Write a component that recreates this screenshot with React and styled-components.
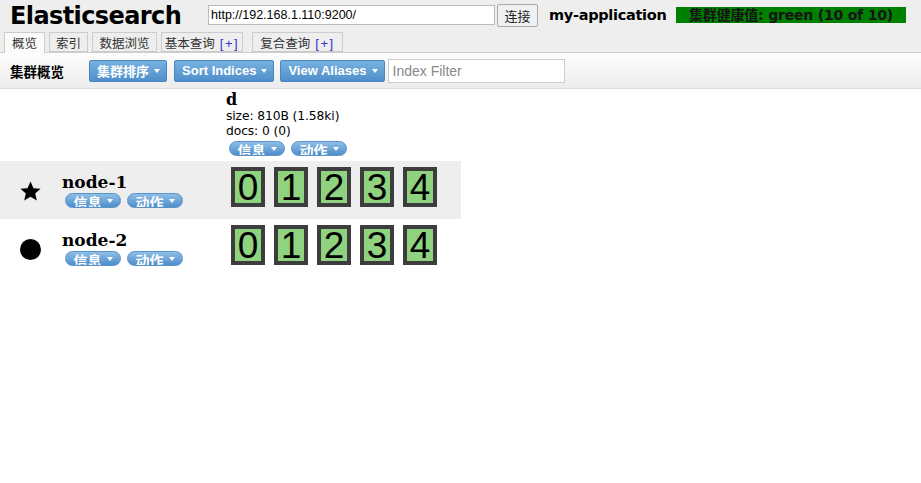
import React from 'react'
import styled, { createGlobalStyle } from 'styled-components'

const Global = createGlobalStyle`
  html, body { margin: 0; padding: 0; background: #fff; }
  body { font-family: "Liberation Sans", Arial, "Noto Sans CJK SC", sans-serif; font-size: 13px; color: #000; }
`

const Header = styled.div`
  background: #eee;
  border-bottom: 1px solid #ccc;
  height: 52px;
  display: flex;
  flex-direction: column;
`
const TopRow = styled.div`
  display: flex;
  align-items: center;
  height: 32px;
  padding-left: 10px;
`
const Title = styled.h1`
  margin: 0;
  font-family: "DejaVu Sans", Verdana, sans-serif;
  font-weight: bold;
  font-size: 24px;
  letter-spacing: -0.6px;
  width: 198px;
  line-height: 32px;
`
const UrlInput = styled.input`
  width: 287px;
  height: 20px;
  box-sizing: border-box;
  border: 1px solid #bbb;
  padding: 0 2px;
  font-family: "Liberation Sans", Arial, sans-serif;
  font-size: 12.5px;
  margin-bottom: 2px;
`
const Connect = styled.button`
  margin-left: 2px;
  height: 23px;
  width: 41px;
  padding: 0;
  background: #f0f0f0;
  border: 1px solid #aaa;
  border-radius: 2px;
  font-family: "Noto Sans CJK SC", sans-serif;
  font-size: 13px;
  color: #222;
  margin-bottom: 2px;
`
const ClusterName = styled.span`
  margin-left: 11px;
  font-family: "DejaVu Sans", Verdana, sans-serif;
  font-weight: bold;
  font-size: 14.5px;
  letter-spacing: -0.3px;
  width: 127px;
  margin-bottom: 2px;
`
const Health = styled.span`
  background: #008000;
  color: #141414;
  width: 230px;
  height: 16px;
  line-height: 16px;
  text-align: center;
  font-family: "DejaVu Sans", Verdana, "Noto Sans CJK SC", sans-serif;
  font-weight: bold;
  font-size: 14px;
  letter-spacing: -0.2px;
  margin-bottom: 3px;
`
const Tabs = styled.div`
  display: flex;
  align-items: flex-end;
  padding-left: 4px;
  height: 20px;
`
const Tab = styled.div`
  margin-right: ${p => p.gap || 4}px;
  width: ${p => p.w}px;
  box-sizing: border-box;
  height: ${p => (p.active ? 21 : 20)}px;
  margin-bottom: ${p => (p.active ? -1 : 0)}px;
  border: 1px solid #ccc;
  border-bottom: ${p => (p.active ? 'none' : '1px solid #ccc')};
  background: ${p => (p.active ? '#fafafa' : '#eee')};
  font-family: "Noto Sans CJK SC", sans-serif;
  font-size: 12.5px;
  color: #333;
  text-align: center;
  line-height: 19px;
`
const Plus = styled.span`
  color: #33c;
  font-family: "Liberation Sans", Arial, sans-serif;
  font-size: 13px;
  letter-spacing: 1.5px;
  margin-left: 5px;
`
const Toolbar = styled.div`
  height: 35px;
  background: linear-gradient(#fdfdfd, #ececec);
  border-bottom: 1px solid #ddd;
  display: flex;
  align-items: center;
  padding-left: 10px;
`
const ToolTitle = styled.span`
  font-family: "Noto Sans CJK SC", sans-serif;
  font-weight: bold;
  font-size: 13.5px;
  width: 79px;
`
const BlueBtn = styled.button`
  height: 22px;
  padding: 0 6px 0 7px;
  margin-right: ${p => p.mr || 7}px;
  border: 1px solid #4a86bf;
  border-radius: 2px;
  background: linear-gradient(#78b1e0, #4f8fcb);
  color: #fff;
  font-family: "Liberation Sans", Arial, "Noto Sans CJK SC", sans-serif;
  font-weight: bold;
  font-size: 13px;
  display: flex;
  align-items: center;
  gap: 5px;
`
const Caret = styled.span`
  width: 0;
  height: 0;
  border-left: 3.5px solid transparent;
  border-right: 3.5px solid transparent;
  border-top: 4px solid #fff;
`
const Filter = styled.input`
  width: 177px;
  height: 24px;
  box-sizing: border-box;
  border: 1px solid #ccc;
  padding: 0 4px;
  font-family: "Liberation Sans", Arial, sans-serif;
  font-size: 14px;
  &::placeholder { color: #888; }
`
const Overview = styled.div`
  display: grid;
  grid-template-columns: 226px 235px;
  margin-top: 2px;
`
const IndexHead = styled.div`
  grid-column: 2;
  padding-bottom: 5px;
`
const IndexName = styled.div`
  font-family: "DejaVu Serif", serif;
  font-weight: bold;
  font-size: 16px;
  line-height: 18px;
`
const Stat = styled.div`
  font-family: "DejaVu Sans", Verdana, sans-serif;
  font-size: 12.3px;
  line-height: 15px;
  letter-spacing: -0.1px;
`
const PillRow = styled.div`
  display: flex;
  gap: 6px;
  margin-top: ${p => p.mt || 0}px;
  padding-left: 3px;
`
const Pill = styled.div`
  width: 56px;
  height: 15px;
  overflow: hidden;
  border-radius: 8px;
  background: linear-gradient(#8ebfe6, #4e8ecb);
  border: 1px solid #5a93c9;
  box-sizing: border-box;
  color: #fff;
  font-family: "Noto Sans CJK SC", sans-serif;
  font-weight: bold;
  font-size: 14px;
  line-height: 17px;
  display: flex;
  justify-content: center;
  gap: 5px;
`
const PillCaret = styled(Caret)`
  margin-top: 5px;
`
const NodeRow = styled.div`
  grid-column: 1 / 3;
  display: grid;
  grid-template-columns: 226px 235px;
  height: 58px;
  background: ${p => (p.shade ? '#eee' : 'transparent')};
`
const NodeCell = styled.div`
  display: flex;
  align-items: center;
`
const NodeIcon = styled.div`
  width: 62px;
  display: flex;
  justify-content: center;
  padding-top: 2px;
  padding-right: 2px;
  box-sizing: border-box;
`
const NodeInfo = styled.div`
  display: flex;
  flex-direction: column;
`
const NodeName = styled.div`
  font-family: "DejaVu Serif", serif;
  font-weight: bold;
  font-size: 17px;
  line-height: 19px;
`
const Shards = styled.div`
  display: flex;
  gap: 9px;
  padding: 6px 0 0 5px;
  align-items: flex-start;
`
const Shard = styled.div`
  width: 34px;
  height: 40px;
  box-sizing: border-box;
  border: 4px solid #3d3d3d;
  background: #8fd27f;
  font-family: "Liberation Sans", Arial, sans-serif;
  font-size: 37px;
  line-height: 33px;
  text-align: center;
  color: #000;
`

const Pills = ({ mt }) => (
  <PillRow mt={mt}>
    <Pill>信息<PillCaret /></Pill>
    <Pill>动作<PillCaret /></Pill>
  </PillRow>
)

const Star = () => (
  <svg width="23" height="23" viewBox="0 0 24 24">
    <path d="M12 1.5l3.1 7 7.4.6-5.6 4.9 1.7 7.4L12 17.4 5.4 21.4l1.7-7.4L1.5 9.1l7.4-.6z" fill="#000" />
  </svg>
)

const Dot = () => (
  <svg width="21" height="21" viewBox="0 0 20 20">
    <circle cx="10" cy="10" r="10" fill="#000" />
  </svg>
)

const nodes = [
  { name: 'node-1', master: true },
  { name: 'node-2', master: false },
]

export default function App() {
  return (
    <>
      <Global />
      <Header>
        <TopRow>
          <Title>Elasticsearch</Title>
          <UrlInput defaultValue="http://192.168.1.110:9200/" />
          <Connect>连接</Connect>
          <ClusterName>my-application</ClusterName>
          <Health>集群健康值: green (10 of 10)</Health>
        </TopRow>
        <Tabs>
          <Tab active w={41}>概览</Tab>
          <Tab w={39}>索引</Tab>
          <Tab w={65}>数据浏览</Tab>
          <Tab w={82} gap={9}>基本查询<Plus>[+]</Plus></Tab>
          <Tab w={91}>复合查询<Plus>[+]</Plus></Tab>
        </Tabs>
      </Header>
      <Toolbar>
        <ToolTitle>集群概览</ToolTitle>
        <BlueBtn mr={7}>集群排序<Caret /></BlueBtn>
        <BlueBtn mr={6}>Sort Indices<Caret /></BlueBtn>
        <BlueBtn mr={3}>View Aliases<Caret /></BlueBtn>
        <Filter placeholder="Index Filter" />
      </Toolbar>
      <Overview>
        <IndexHead>
          <IndexName>d</IndexName>
          <Stat>size: 810B (1.58ki)</Stat>
          <Stat>docs: 0 (0)</Stat>
          <Pills mt={2} />
        </IndexHead>
        {nodes.map((n, i) => (
          <NodeRow key={n.name} shade={i === 0}>
            <NodeCell>
              <NodeIcon>{n.master ? <Star /> : <Dot />}</NodeIcon>
              <NodeInfo>
                <NodeName>{n.name}</NodeName>
                <Pills mt={1} />
              </NodeInfo>
            </NodeCell>
            <Shards>
              {[0, 1, 2, 3, 4].map(s => <Shard key={s}>{s}</Shard>)}
            </Shards>
          </NodeRow>
        ))}
      </Overview>
    </>
  )
}
